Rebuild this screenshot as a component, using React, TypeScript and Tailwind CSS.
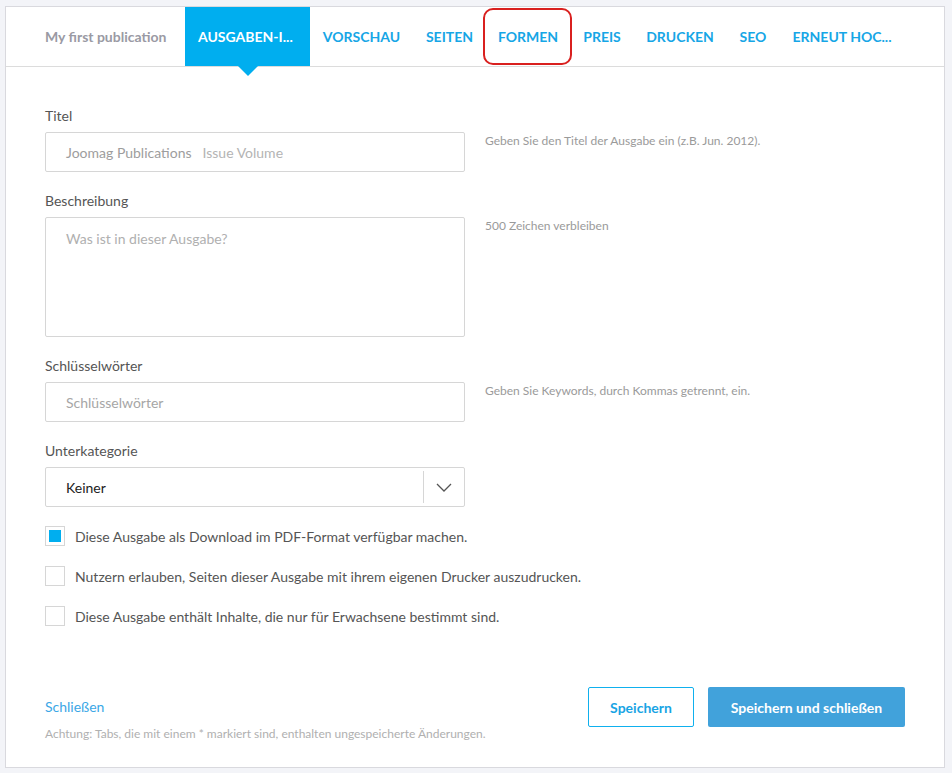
import React from "react";

const tabs: { label: string; w: string }[] = [
  { label: "VORSCHAU", w: "w-[103px]" },
  { label: "SEITEN", w: "w-[73px]" },
  { label: "FORMEN", w: "w-[84px]" },
  { label: "PREIS", w: "w-[64px]" },
  { label: "DRUCKEN", w: "w-[92px]" },
  { label: "SEO", w: "w-[54px]" },
  { label: "ERNEUT HOC...", w: "w-[124px]" },
];

function Field({
  label,
  help,
  children,
}: {
  label: string;
  help?: string;
  children: React.ReactNode;
}) {
  return (
    <div className="flex flex-col">
      <div className="h-5 leading-5 text-[14px] text-[#555]">{label}</div>
      <div className="mt-[6px] flex">
        <div className="w-[420px]">{children}</div>
        {help && (
          <div className="ml-5 pt-[1px] text-[12px] leading-4 text-[#9a9a9a]">{help}</div>
        )}
      </div>
    </div>
  );
}

function Check({ checked, label }: { checked?: boolean; label: string }) {
  return (
    <div className="flex items-center h-5">
      <div className="w-5 h-5 border border-[#d6d6d6] bg-white p-[3px]">
        {checked && <div className="w-full h-full bg-[#00aeef]" />}
      </div>
      <span className="ml-[10px] text-[14px] text-[#555]">{label}</span>
    </div>
  );
}

export default function App() {
  return (
    <div
      className="w-[952px] h-[773px] bg-[#f3f4f8] pt-[6px] pl-[5px]"
      style={{ fontFamily: "Lato, 'Open Sans', Arial, sans-serif" }}
    >
      <div className="w-[940px] h-[762px] bg-white border border-[#d9d9de] flex flex-col relative">
        {/* tab bar */}
        <div className="h-[60px] border-b border-[#dcdcdc] flex items-stretch pl-[39px] relative">
          <div className="w-[140px] flex items-center text-[14px] font-bold text-[#9a9aa4]">
            My first publication
          </div>
          <div className="relative w-[125px] bg-[#00aeef] flex items-center pl-[13px] text-[14px] font-bold text-white">
            AUSGABEN-I...
            <div className="absolute left-1/2 -translate-x-1/2 top-full w-0 h-0 border-l-[10px] border-r-[10px] border-t-[10px] border-l-transparent border-r-transparent border-t-[#00aeef]" />
          </div>
          {tabs.map((t) => (
            <div
              key={t.label}
              className={`${t.w} flex items-center justify-center text-[14px] font-bold text-[#16a6e6]`}
            >
              {t.label}
            </div>
          ))}
          <div className="absolute left-[477px] top-[1px] w-[89px] h-[57px] border-2 border-[#d9201f] rounded-[10px]" />
        </div>

        {/* form */}
        <div className="flex flex-col px-[39px] pt-[39px] gap-[19px]">
          <Field label="Titel" help="Geben Sie den Titel der Ausgabe ein (z.B. Jun. 2012).">
            <div className="h-10 border border-[#d6d6d6] rounded-[2px] flex items-center pl-5 text-[14px]">
              <span className="text-[#9d9d9d]">Joomag Publications</span>
              <span className="ml-[11px] text-[#b4b4b4]">Issue Volume</span>
            </div>
          </Field>
          <Field label="Beschreibung" help="500 Zeichen verbleiben">
            <div className="h-[120px] border border-[#d6d6d6] rounded-[2px] pl-5 pt-[10px] text-[14px] text-[#b0b0b0]">
              Was ist in dieser Ausgabe?
            </div>
          </Field>
          <Field label="Schlüsselwörter" help="Geben Sie Keywords, durch Kommas getrennt, ein.">
            <div className="h-10 border border-[#d6d6d6] rounded-[2px] flex items-center pl-5 text-[14px] text-[#a6a6a6]">
              Schlüsselwörter
            </div>
          </Field>
          <Field label="Unterkategorie">
            <div className="h-10 border border-[#d6d6d6] rounded-[2px] flex items-center text-[14px] text-[#222]">
              <span className="pl-5 flex-1">Keiner</span>
              <div className="w-px h-[32px] bg-[#d6d6d6]" />
              <div className="w-10 flex items-center justify-center">
                <svg width="16" height="9" viewBox="0 0 16 9" fill="none">
                  <path d="M1 1l7 7 7-7" stroke="#555" strokeWidth="1.3" />
                </svg>
              </div>
            </div>
          </Field>
          <div className="flex flex-col gap-5">
            <Check checked label="Diese Ausgabe als Download im PDF-Format verfügbar machen." />
            <Check label="Nutzern erlauben, Seiten dieser Ausgabe mit ihrem eigenen Drucker auszudrucken." />
            <Check label="Diese Ausgabe enthält Inhalte, die nur für Erwachsene bestimmt sind." />
          </div>
        </div>

        {/* footer */}
        <div className="mt-auto px-[39px] pb-[26px]">
          <div className="flex items-center justify-between">
            <span className="text-[14px] text-[#3ba7e6] -mt-[2px]">Schließen</span>
            <div className="flex items-center gap-[14px]">
              <div className="w-[106px] h-10 border border-[#0fb0ee] rounded-[2px] flex items-center justify-center text-[14px] font-bold text-[#18a4e4]">
                Speichern
              </div>
              <div className="w-[197px] h-10 bg-[#41a2db] rounded-[2px] flex items-center justify-center text-[14px] font-bold text-white">
                Speichern und schließen
              </div>
            </div>
          </div>
          <div className="text-[12px] leading-[14px] text-[#b0b0b0]">
            Achtung: Tabs, die mit einem * markiert sind, enthalten ungespeicherte Änderungen.
          </div>
        </div>
      </div>
    </div>
  );
}
